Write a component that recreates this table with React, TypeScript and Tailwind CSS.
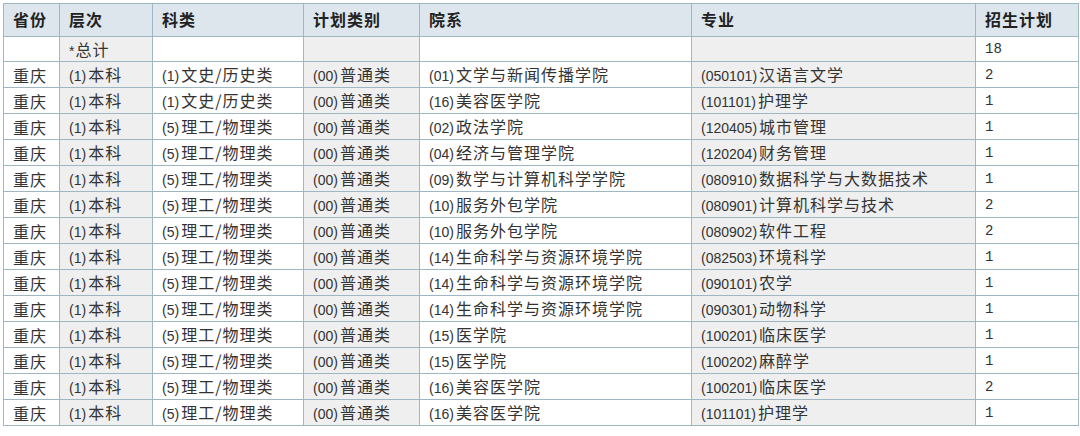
import React from "react";

type Row = {
  prov: string;
  level: string;
  subject: string;
  plan: string;
  dept: string;
  major: string;
  count: string;
};

const rows: Row[] = [
  { prov: "重庆", level: "(1)本科", subject: "(1)文史/历史类", plan: "(00)普通类", dept: "(01)文学与新闻传播学院", major: "(050101)汉语言文学", count: "2" },
  { prov: "重庆", level: "(1)本科", subject: "(1)文史/历史类", plan: "(00)普通类", dept: "(16)美容医学院", major: "(101101)护理学", count: "1" },
  { prov: "重庆", level: "(1)本科", subject: "(5)理工/物理类", plan: "(00)普通类", dept: "(02)政法学院", major: "(120405)城市管理", count: "1" },
  { prov: "重庆", level: "(1)本科", subject: "(5)理工/物理类", plan: "(00)普通类", dept: "(04)经济与管理学院", major: "(120204)财务管理", count: "1" },
  { prov: "重庆", level: "(1)本科", subject: "(5)理工/物理类", plan: "(00)普通类", dept: "(09)数学与计算机科学学院", major: "(080910)数据科学与大数据技术", count: "1" },
  { prov: "重庆", level: "(1)本科", subject: "(5)理工/物理类", plan: "(00)普通类", dept: "(10)服务外包学院", major: "(080901)计算机科学与技术", count: "2" },
  { prov: "重庆", level: "(1)本科", subject: "(5)理工/物理类", plan: "(00)普通类", dept: "(10)服务外包学院", major: "(080902)软件工程", count: "2" },
  { prov: "重庆", level: "(1)本科", subject: "(5)理工/物理类", plan: "(00)普通类", dept: "(14)生命科学与资源环境学院", major: "(082503)环境科学", count: "1" },
  { prov: "重庆", level: "(1)本科", subject: "(5)理工/物理类", plan: "(00)普通类", dept: "(14)生命科学与资源环境学院", major: "(090101)农学", count: "1" },
  { prov: "重庆", level: "(1)本科", subject: "(5)理工/物理类", plan: "(00)普通类", dept: "(14)生命科学与资源环境学院", major: "(090301)动物科学", count: "1" },
  { prov: "重庆", level: "(1)本科", subject: "(5)理工/物理类", plan: "(00)普通类", dept: "(15)医学院", major: "(100201)临床医学", count: "1" },
  { prov: "重庆", level: "(1)本科", subject: "(5)理工/物理类", plan: "(00)普通类", dept: "(15)医学院", major: "(100202)麻醉学", count: "1" },
  { prov: "重庆", level: "(1)本科", subject: "(5)理工/物理类", plan: "(00)普通类", dept: "(16)美容医学院", major: "(100201)临床医学", count: "2" },
  { prov: "重庆", level: "(1)本科", subject: "(5)理工/物理类", plan: "(00)普通类", dept: "(16)美容医学院", major: "(101101)护理学", count: "1" },
];

// splits "(05)xxx" into the latin code and the chinese rest so each gets its own font
const Cell: React.FC<{ text: string }> = ({ text }) => {
  const m = text.match(/^(\([0-9]+\))(.*)$/);
  if (!m) {
    return <span className="tracking-[1px]">{text}</span>;
  }
  return (
    <>
      <span className="font-['Liberation_Sans',sans-serif] text-[14px] tracking-normal mr-[2px]">{m[1]}</span>
      <span className="tracking-[1px]">{m[2]}</span>
    </>
  );
};

const widths = ["w-[56px]", "w-[93px]", "w-[151px]", "w-[116px]", "w-[272px]", "w-[284px]", "w-[103px]"];
const headers = ["省份", "层次", "科类", "计划类别", "院系", "专业", "招生计划"];
const shade = ["bg-white", "bg-[#efefef]", "bg-white", "bg-[#efefef]", "bg-white", "bg-[#efefef]", "bg-white"];

const td = "border border-[#9fb6c3] pl-[9px] whitespace-nowrap align-middle";

export default function App() {
  return (
    <div className="w-[1080px] h-[436px] bg-white pt-[3px] pl-[3px] font-['Noto_Sans_CJK_SC',sans-serif] text-[16px] text-[#333] leading-none">
      <table className="border-collapse table-fixed w-[1075px]">
        <colgroup>
          {widths.map((w, i) => (
            <col key={i} className={w} />
          ))}
        </colgroup>
        <thead>
          <tr className="h-[33px] bg-[#dde6ed]">
            {headers.map((h, i) => (
              <th key={i} className={`${td} text-left font-bold text-[16px] text-[#222] tracking-[1px] pb-[2px]`}>
                {h}
              </th>
            ))}
          </tr>
        </thead>
        <tbody>
          <tr className="h-[25px]">
            <td className={`${td} ${shade[0]}`}></td>
            <td className={`${td} ${shade[1]}`}>
              <span className="font-['Liberation_Sans',sans-serif] text-[14px] mr-[1px]">*</span>
              <span className="tracking-[1px]">总计</span>
            </td>
            <td className={`${td} ${shade[2]}`}></td>
            <td className={`${td} ${shade[3]}`}></td>
            <td className={`${td} ${shade[4]}`}></td>
            <td className={`${td} ${shade[5]}`}></td>
            <td className={`${td} ${shade[6]} font-['Liberation_Mono',monospace] text-[14px]`}>18</td>
          </tr>
          {rows.map((r, i) => (
            <tr key={i} className="h-[26px]">
              <td className={`${td} ${shade[0]}`}><Cell text={r.prov} /></td>
              <td className={`${td} ${shade[1]}`}><Cell text={r.level} /></td>
              <td className={`${td} ${shade[2]}`}><Cell text={r.subject} /></td>
              <td className={`${td} ${shade[3]}`}><Cell text={r.plan} /></td>
              <td className={`${td} ${shade[4]}`}><Cell text={r.dept} /></td>
              <td className={`${td} ${shade[5]}`}><Cell text={r.major} /></td>
              <td className={`${td} ${shade[6]} font-['Liberation_Mono',monospace] text-[14px]`}>{r.count}</td>
            </tr>
          ))}
        </tbody>
      </table>
    </div>
  );
}
